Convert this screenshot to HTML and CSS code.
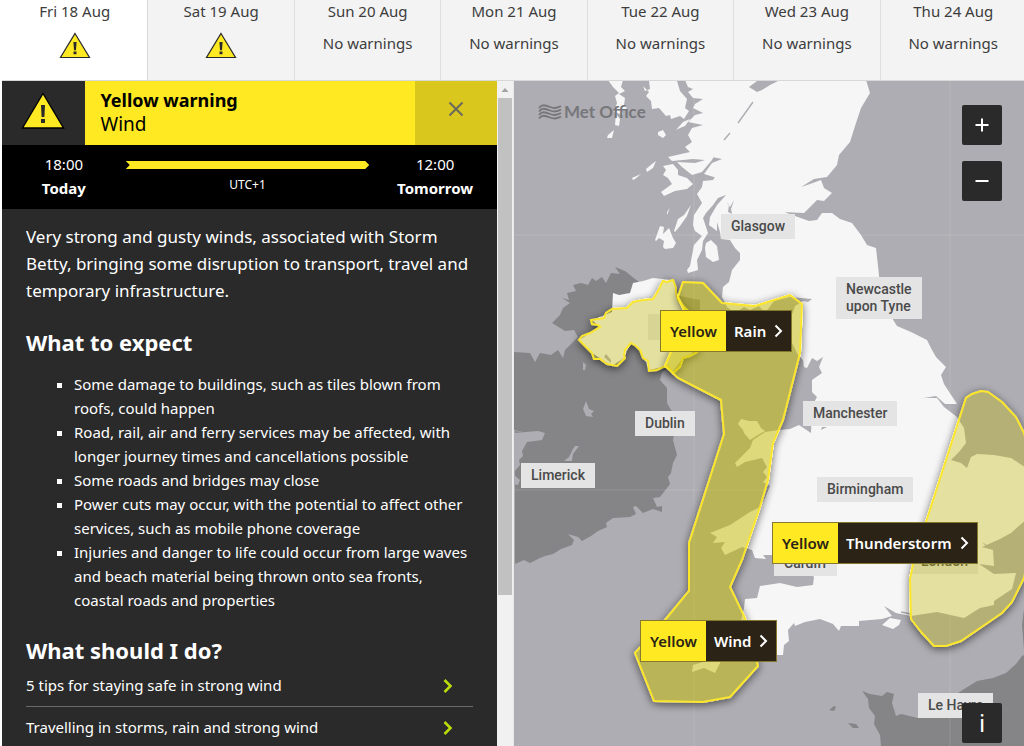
FILE: index.html
```html
<!DOCTYPE html>
<html lang="en-GB">

<head>
    <meta charset="utf-8">
    <meta name="viewport" content="width=device-width, initial-scale=1">
    <title>UK weather warnings - Met Office</title>
    <link rel="stylesheet" href="styles.css">
</head>

<body>
    <nav class="days" aria-label="Warning days">
        <button class="day active" type="button">
            <span>Fri 18 Aug</span>
            <svg class="day-icon" viewBox="0 0 32 27" role="img" aria-label="Yellow warning">
                <path d="M16 1.5 30.5 25.5H1.5Z" fill="#fee922" stroke="#2a2a2a" stroke-width="1.2" />
                <path d="M14.4 10h3.2l-.6 8.2h-2zM14.5 19.6h3v2.6h-3z" fill="#2a2a2a" />
            </svg>
        </button>
        <button class="day" type="button">
            <span>Sat 19 Aug</span>
            <svg class="day-icon" viewBox="0 0 32 27" role="img" aria-label="Yellow warning">
                <path d="M16 1.5 30.5 25.5H1.5Z" fill="#fee922" stroke="#2a2a2a" stroke-width="1.2" />
                <path d="M14.4 10h3.2l-.6 8.2h-2zM14.5 19.6h3v2.6h-3z" fill="#2a2a2a" />
            </svg>
        </button>
        <button class="day" type="button"><span>Sun 20 Aug</span><span>No warnings</span></button>
        <button class="day" type="button"><span>Mon 21 Aug</span><span>No warnings</span></button>
        <button class="day" type="button"><span>Tue 22 Aug</span><span>No warnings</span></button>
        <button class="day" type="button"><span>Wed 23 Aug</span><span>No warnings</span></button>
        <button class="day" type="button"><span>Thu 24 Aug</span><span>No warnings</span></button>
    </nav>

    <main class="content">
        <section class="side">
            <div class="panel">
                <header class="warning-head">
                    <div class="warning-icon">
                        <svg width="44" height="38" viewBox="0 0 44 38" aria-hidden="true">
                            <path d="M22 1.5 42.5 36H1.5Z" fill="#fee922" stroke="#000" stroke-width="1.4" />
                            <path d="M20 13h4l-.6 12h-2.8zM20 27h4v4h-4z" fill="#2a2a2a" />
                        </svg>
                    </div>
                    <div class="warning-title">
                        <h1>Yellow warning</h1>
                        <p>Wind</p>
                    </div>
                    <button class="close" type="button" aria-label="Close">
                        <svg width="16" height="16" viewBox="0 0 16 16"><path d="M1.5 1.5l13 13M14.5 1.5l-13 13" fill="none" stroke="#6b6a5c" stroke-width="2" /></svg>
                    </button>
                </header>

                <div class="period">
                    <div class="time"><span>18:00</span><strong>Today</strong></div>
                    <div class="span">
                        <div class="span-bar"></div>
                        <span>UTC+1</span>
                    </div>
                    <div class="time"><span>12:00</span><strong>Tomorrow</strong></div>
                </div>

                <div class="details">
                    <p class="intro">Very strong and gusty winds, associated with Storm Betty, bringing some disruption to transport, travel and temporary infrastructure.</p>

                    <h2>What to expect</h2>
                    <ul class="expect">
                        <li>Some damage to buildings, such as tiles blown from roofs, could happen</li>
                        <li>Road, rail, air and ferry services may be affected, with longer journey times and cancellations possible</li>
                        <li>Some roads and bridges may close</li>
                        <li>Power cuts may occur, with the potential to affect other services, such as mobile phone coverage</li>
                        <li>Injuries and danger to life could occur from large waves and beach material being thrown onto sea fronts, coastal roads and properties</li>
                    </ul>

                    <h2>What should I do?</h2>
                    <div class="advice">
                        <a href="#strong-wind">5 tips for staying safe in strong wind
                            <svg width="10" height="16" viewBox="0 0 10 16"><path d="M1.5 2 7.5 8l-6 6" fill="none" stroke="#b9dc0c" stroke-width="2.6" /></svg>
                        </a>
                        <a href="#travelling">Travelling in storms, rain and strong wind
                            <svg width="10" height="16" viewBox="0 0 10 16"><path d="M1.5 2 7.5 8l-6 6" fill="none" stroke="#b9dc0c" stroke-width="2.6" /></svg>
                        </a>
                    </div>
                </div>
            </div>
            <div class="scrollbar" aria-hidden="true">
                <div class="scroll-up"></div>
                <div class="scroll-thumb"></div>
            </div>
        </section>

        <section class="map" aria-label="Warnings map">
            <!-- land -->
            <svg class="layer" width="510" height="665" viewBox="514 81 510 665" aria-hidden="true">
                <!-- Ireland and France -->
                <g fill="#858587">
                    <path d="M562 298L569 300 567 293 576 291 573 285 581 283 588 285 592 278 596 281 602 277 606 283 611 273 620 274 615 267 625 271 635 279 650 290 700 300 700 350 683 360 662 372 660 380 667 388 667 403 671 410 675 413 675 430 673 440 677 455 673 463 671 473 668 477 670 484 667 488 660 497 653 498 657 507 662 506 662 512 653 509 643 513 636 506 633 507 636 514 630 517 613 518 606 523 607 527 598 531 591 536 582 541 578 537 568 534 574 540 572 545 561 549 553 554 545 556 540 558 530 563 524 560 515 564V431L527 433 514 430V352L530 353 535 362 540 353 551 355 558 350 563 358 565 350 572 343 578 337 574 330 565 331 552 323 560 315 563 308 570 303Z" />
                    <path d="M1030 652L1022 656 1016 664 1006 673 993 678 977 681 961 691 945 702 918 718 901 714 896 716 892 703 894 694 887 692 882 696 870 694 862 691 868 699 869 708 875 716 874 724 880 735 881 746H1030ZM1024 609L1022 625 1024 650ZM829 710L834 706 836 707 834 711ZM848 723L856 724 859 728 853 728Z" />
                </g>
                <!-- Irish bays and lakes -->
                <path d="M514 433L538 431 545 433 542 440 535 441 527 442 522 451 523 456 519 460 520 465 514 472ZM514 475L520 480 518 485 514 484ZM583 362L586 365 585 370 583 370ZM586 401L589 409 594 411 591 414 593 417 586 416 583 409ZM575 446L579 446 573 454 572 461 564 461 569 457 573 449Z" fill="#aeadb3" />
                <g fill="#f6f6f6">
                    <!-- Northern Ireland -->
                    <path d="M612 312L613 293 619 295 630 293 633 283 643 281 653 278 663 279 673 280 677 293 684 306 697 318 698 345 690 356 683 358 673 371 663 367 649 370 640 350 631 343 624 358 612 366 592 353 579 340 600 327 592 320Z" />
                    <!-- Great Britain -->
                    <path d="M685 80L688 87 693 89 688 92 693 98 703 99 695 104 693 108 703 113 695 115 688 122 703 125 692 128 688 135 692 142 685 147 690 152 668 157 672 161 683 160 693 159 705 160 695 163 677 162 682 167 692 175 702 172 712 160 717 150 712 157 722 159 712 163 704 174 717 178 719 171 713 180 703 181 702 187 697 194 702 203 694 215 693 225 695 231 702 236 694 245 690 266 687 270 688 273 698 270 697 260 702 250 703 241 708 233 703 218 706 213 713 205 718 198 726 195 717 205 710 217 709 225 717 231 717 222 720 232 721 239 730 240 735 248 740 253 740 260 732 270 729 282 723 287 722 297 727 307 735 313 744 307 750 310 759 306 765 313 774 301 790 297 812 299 808 302 803 301 795 306 791 318 790 329 792 343 798 355 803 360 804 367 807 368 812 358 817 361 823 357 819 367 822 373 812 380 812 392 817 397 812 406 811 433 799 425 790 429 779 430 765 432 753 440 750 448 735 463 737 467 745 462 762 458 767 467 763 472 767 477 763 482 770 486 764 500 760 507 750 512 730 525 710 533 717 537 713 543 725 542 721 548 725 555 742 547 752 550 755 558 766 559 763 555 775 555 777 562 792 571 810 573 814 577 813 585 797 587 780 583 760 586 757 598 745 599 744 608 740 625 730 640 715 653 706 661 693 665 692 672 704 668 715 673 722 659 740 650 760 646 771 655 783 655 784 645 789 641 788 630 794 623 795 626 805 622 820 619 833 624 839 631 841 626 859 626 859 621 882 619 892 616 884 606 896 613 911 616 937 612 964 618 980 608 994 605 994 601 1012 589 1016 573 994 574 979 564 994 566 993 550 982 547 1000 539 1011 533 1028 518V469L1011 458 994 455 977 454 971 457 967 468 961 463 951 460 959 452 966 443 964 428 957 417 944 407 937 398 925 398 918 399 936 396 945 404 957 404 944 384 941 375 946 367 936 357 932 350 927 340 911 332 897 326 892 318 884 309 880 295 879 275 876 248 867 245 861 235 852 223 840 219 832 213 822 213 817 220 809 221 795 216 776 209 782 212 804 213 817 200 824 201 832 193 824 188 821 180 810 184 801 187 814 179 827 177 837 165 839 155 850 142 856 123 861 108 870 93 866 80Z" />
                    <!-- islands -->
                    <path d="M643 86L649 92 646 96 651 101 652 109 659 108 666 116 670 115 671 119 680 116 684 119 689 111 685 108 687 99 680 91 677 81H649L650 89 645 91ZM608 80H623L621 87 625 91 619 94 625 98 624 105 627 108 622 111 623 115 614 112 617 103 615 96 619 93 613 87ZM616 114L620 119 619 126 615 125ZM608 135L614 130 612 138 607 138ZM658 132L663 130 666 135 663 138 658 135ZM632 178L641 174 635 179 633 180ZM646 169L652 164 656 161 653 168 647 172ZM661 192L672 184 668 178 663 175 666 170 663 166 673 164 678 170 678 175 687 178 693 184 687 189 675 191 664 196ZM667 212L670 208 667 215ZM674 231L678 219 684 215 691 205 687 216 680 226 675 232ZM655 240L660 226 664 227 663 234 669 228 673 238 676 243 673 248 665 249 663 247 664 241 659 238 656 241ZM706 243L711 240 717 246 719 260 713 262 706 257 705 248ZM676 130L683 122 690 119 685 126 680 128ZM738 424L741 419 749 421 757 421 761 428 765 431 758 435 750 440 744 433 743 430ZM882 625L890 618 901 620 899 625 893 629Z" />
                </g>
                <!-- firths and lochs -->
                <g fill="#aeadb3">
                    <path d="M749 87L757 81 780 80 770 85 762 90 757 92ZM728 212L729 205 726 202 730 207 734 200 731 209 732 214ZM822 427H827L821 430ZM734 330L744 318 754 313 748 325 741 329 738 335ZM979 546L988 548 982 542 993 549ZM606 354L611 360V363L604 357Z" />
                    <path d="M753 102L738 123M730 133L724 140M901 612L911 614" fill="none" stroke="#aeadb3" stroke-width="1.4" />
                </g>
                <path d="M694 81v665M950 81v665M514 235h510M514 490h510" fill="none" stroke="#fff" stroke-opacity=".13" />
            </svg>

            <!-- town names -->
            <span class="town belfast"></span>
            <span class="town glasgow">Glasgow</span>
            <span class="town newcastle">Newcastle<br>upon Tyne</span>
            <span class="town manchester">Manchester</span>
            <span class="town birmingham">Birmingham</span>
            <span class="town dublin">Dublin</span>
            <span class="town limerick">Limerick</span>
            <span class="town cardiff">Cardiff</span>
            <span class="town london">London</span>
            <span class="town le-havre">Le Havre</span>

            <!-- warning areas -->
            <svg class="layer" width="510" height="665" viewBox="514 81 510 665" aria-hidden="true">
                <defs>
                    <filter id="edge" x="-20%" y="-20%" width="140%" height="140%">
                        <feComponentTransfer in="SourceAlpha" result="solid"><feFuncA type="linear" slope="4" /></feComponentTransfer>
                        <feGaussianBlur in="solid" stdDeviation="4" result="blur" />
                        <feOffset in="blur" dy="2" result="off" />
                        <feComposite in="off" in2="solid" operator="out" result="shade" />
                        <feComponentTransfer in="shade" result="soft"><feFuncA type="linear" slope=".55" /></feComponentTransfer>
                        <feMerge><feMergeNode in="soft" /><feMergeNode in="SourceGraphic" /></feMerge>
                    </filter>
                </defs>
                <path class="area pale" filter="url(#edge)" d="M612 309L627 308 633 302 643 300 653 299 658 291 663 281 667 282 673 280 676 288 676 293 678 300 685 308 696 318 699 345 697 352 690 356 683 358 680 367 673 373 668 366 663 367 657 370 649 371 648 361 643 358 640 350 636 346 631 343 625 350 624 355 625 358 619 364 617 366 607 364 600 359 594 359 592 353 586 347 579 340 582 336 590 333 600 327 598 325 592 324 591 320 604 318 606 313Z" />
                <path class="area" filter="url(#edge)" d="M683 282L703 283 722 303 733 304 755 306 790 295 802 304 800 353 783 420 773 443 768 480 760 507 742 560 730 587 745 618 758 666 730 697 703 702 654 701 635 653 665 620 689 591V543L724 434 721 400 678 378 665 366 672 350 685 312 678 297Z" />
                <path class="area pale" filter="url(#edge)" d="M926 522L966 398 972 394 981 391 988 392 1002 402 1016 417 1024 433 1034 473V530L1024 578 1012 602 1002 613 961 641 946 646H934L922 633 911 619 910 579 913 564Z" />
            </svg>

            <div class="brand">
                <svg width="24" height="16" viewBox="0 0 24 16" aria-hidden="true">
                    <path d="M1 4c3-4 6-3 11-1s8 1 11-1M1 7.500c3-4 6-3 11-1s8 1 11-1M1 11c3-4 6-3 11-1s8 1 11-1M1 14.500c3-4 6-3 11-1s8 1 11-1" fill="none" stroke="#77777b" stroke-width="1.800" />
                </svg>
                <span>Met Office</span>
            </div>

            <a class="tag tag-rain" href="#rain">
                <span class="level">Yellow</span>
                <span class="kind">Rain <svg width="9" height="14" viewBox="0 0 9 14"><path d="M1.500 1.500 7 7l-5.500 5.500" fill="none" stroke="#fff" stroke-width="2" /></svg></span>
            </a>
            <a class="tag tag-thunder" href="#thunderstorm">
                <span class="level">Yellow</span>
                <span class="kind">Thunderstorm <svg width="9" height="14" viewBox="0 0 9 14"><path d="M1.500 1.500 7 7l-5.500 5.500" fill="none" stroke="#fff" stroke-width="2" /></svg></span>
            </a>
            <a class="tag tag-wind" href="#wind">
                <span class="level">Yellow</span>
                <span class="kind">Wind <svg width="9" height="14" viewBox="0 0 9 14"><path d="M1.500 1.500 7 7l-5.500 5.500" fill="none" stroke="#fff" stroke-width="2" /></svg></span>
            </a>

            <div class="zoom">
                <button type="button" aria-label="Zoom in"><svg width="14" height="14" viewBox="0 0 14 14"><path d="M7 .5v13M.5 7h13" stroke="#fff" stroke-width="2" /></svg></button>
                <button type="button" aria-label="Zoom out"><svg width="14" height="14" viewBox="0 0 14 14"><path d="M.5 7h13" stroke="#fff" stroke-width="2" /></svg></button>
            </div>
            <button class="info" type="button">i</button>
        </section>
    </main>
</body>

</html>
```
FILE: styles.css
```css
* {
    box-sizing: border-box;
}

body {
    display: flex;
    flex-direction: column;
    height: 100vh;
    margin: 0;
    padding-left: 2px;
    overflow: hidden;
    background: #fff;
    color: #2a2a2a;
    font-family: "Noto Sans", "Open Sans", sans-serif;
    font-size: 15px;
    line-height: 24px;
}

h1, h2, p, ul {
    margin: 0;
    padding: 0;
}

button {
    padding: 0;
    border: 0;
    font: inherit;
    color: inherit;
    cursor: pointer;
}

a {
    color: inherit;
    text-decoration: none;
}

/* day tabs */
.days {
    display: flex;
    flex: none;
    height: 81px;
    margin-right: -3px;
}

.day {
    display: flex;
    flex: 1;
    flex-direction: column;
    align-items: center;
    gap: 10px;
    border-right: 1px solid #dedede;
    border-bottom: 1px solid #d8d8d8;
    background: #f3f3f3;
    color: #3c3c3c;
    line-height: 22px;
}

.day.active {
    border-right-color: #d8d8d8;
    background: #fff;
}

.day-icon {
    width: 32px;
    height: 27px;
}

.content {
    display: grid;
    grid-template-columns: 1fr 1fr;
    flex: 1;
    min-height: 0;
}

/* warning details */
.side {
    display: flex;
    min-width: 0;
    min-height: 0;
    background: #fff;
}

.panel {
    flex: 1;
    overflow: hidden;
    background: #2a2a2a;
    color: #fff;
}

.warning-head {
    display: grid;
    grid-template-columns: 1fr 4fr 1fr;
    height: 64px;
}

.warning-icon,
.close {
    display: flex;
    align-items: center;
    justify-content: center;
}

.warning-icon {
    padding-bottom: 4px;
}

.warning-title {
    padding: 7px 16px;
    background: #fee922;
    color: #000;
    font-size: 19px;
}

.warning-title h1 {
    font-size: 18px;
    line-height: 24px;
}

.close {
    padding-bottom: 8px;
    background: #d9c71e;
}

.period {
    display: grid;
    grid-template-columns: 1fr 2fr 1fr;
    height: 64px;
    padding-top: 7px;
    background: #000;
}

.time {
    display: flex;
    flex-direction: column;
    align-items: center;
}

.span {
    display: flex;
    flex-direction: column;
    align-items: center;
    gap: 4px;
    padding: 9px 4px 0 0;
    font-size: 12px;
}

.span-bar {
    width: 100%;
    height: 8px;
    background: #fee922;
    clip-path: polygon(0 0, calc(100% - 4px) 0, 100% 50%, calc(100% - 4px) 100%, 0 100%, 4px 50%);
}

.details {
    padding: 14px 24px 0;
}

.intro {
    font-size: 17px;
    line-height: 27px;
}

h2 {
    padding-top: 23px;
    font-size: 22px;
    line-height: 30px;
}

.expect {
    margin-top: 15px;
    padding-left: 48px;
    list-style: square;
}

.advice a {
    display: flex;
    align-items: center;
    justify-content: space-between;
    padding-right: 20px;
    border-bottom: 1px solid #6a6a6a;
    line-height: 41px;
}

.scrollbar {
    width: 16px;
    padding: 0 1px;
    background: #f1f1f1;
}

.scroll-up {
    height: 17px;
    background: #a3a3a3;
    clip-path: polygon(50% 7px, 75% 11px, 25% 11px);
}

.scroll-thumb {
    height: 497px;
    background: #c1c1c1;
}

/* map */
.map {
    position: relative;
    overflow: hidden;
    border-left: 1px solid #e8e8e8;
    background: #aeadb3;
}

.layer {
    position: absolute;
    top: 0;
    left: 0;
}

.area {
    fill: #c6bb0b;
    fill-opacity: .5;
    stroke: #fbe62b;
    stroke-width: 2;
}

.area.pale {
    fill: #c2b80b;
    fill-opacity: .35;
}

.town {
    position: absolute;
    padding: 4px 10px;
    background: #e4e4e4;
    color: #4a4a4a;
    font: 500 14px/17px Roboto, sans-serif;
    white-space: nowrap;
}

/* sits under the rain tag, only its box shows */
.belfast { left: 134px; top: 233px; width: 68px; height: 26px; }
.glasgow { left: 207px; top: 133px; }
.newcastle { left: 322px; top: 196px; }
.manchester { left: 289px; top: 320px; }
.birmingham { left: 303px; top: 396px; }
.dublin { left: 121px; top: 330px; }
.limerick { left: 7px; top: 382px; }
.cardiff { left: 260px; top: 470px; }
.london { left: 397px; top: 468px; }
.le-havre { left: 404px; top: 612px; }

.brand {
    position: absolute;
    top: 19px;
    left: 24px;
    display: flex;
    align-items: center;
    gap: 2px;
    color: #77777b;
    font: bold 17px/24px Lato, sans-serif;
}

.tag {
    position: absolute;
    display: flex;
    border: 1px solid #857930;
    font-weight: 600;
    line-height: 40px;
    white-space: nowrap;
}

.tag-rain { left: 146px; top: 229px; }
.tag-thunder { left: 258px; top: 441px; }
.tag-wind { left: 126px; top: 539px; }

.level {
    padding: 0 9px;
    background: #fee922;
    color: #2a2316;
}

.kind {
    display: flex;
    align-items: center;
    gap: 8px;
    padding: 0 8px;
    background: #2a2316;
    color: #fff;
}

.zoom {
    position: absolute;
    top: 24px;
    right: 22px;
    display: grid;
    gap: 16px;
}

.zoom button,
.info {
    display: flex;
    align-items: center;
    justify-content: center;
    width: 40px;
    height: 40px;
    border-radius: 2px;
    background: #2a2a2a;
    color: #fff;
}

.info {
    position: absolute;
    right: 22px;
    bottom: 3px;
    font-size: 24px;
}
```
